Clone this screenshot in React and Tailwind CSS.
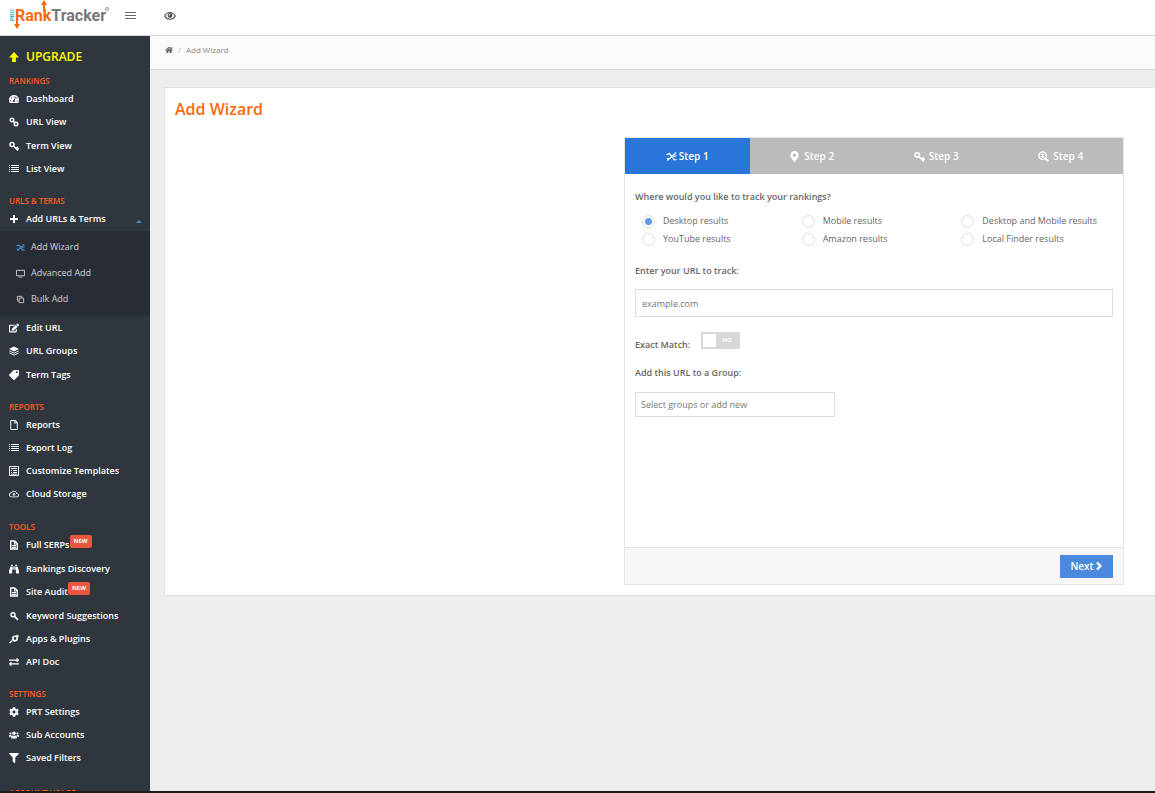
import React, { useState } from "react";
import {
  FaBinoculars,
  FaCog,
  FaEdit,
  FaExchangeAlt,
  FaFilter,
  FaHome,
  FaMapMarkerAlt,
  FaRegFile,
  FaTachometerAlt,
  FaTag,
  FaUsers,
} from "react-icons/fa";
import { MdOutlineCloudUpload } from "react-icons/md";

const UpIcon = ({ className }) => (
  <svg viewBox="0 0 10 10" fill="currentColor" className={className}>
    <path d="M5 0l5 5.5H6.8V10H3.2V5.5H0z" />
  </svg>
);

const KeyIcon = ({ className }) => (
  <svg
    viewBox="0 0 10 10"
    fill="none"
    stroke="currentColor"
    strokeWidth="1.5"
    className={className}
  >
    <circle cx="3" cy="3.6" r="2" />
    <path d="M4.5 5L9 9.5M7 7.5l1.8-1.8M8.2 8.6L10 7" />
  </svg>
);

const ChainIcon = ({ className }) => (
  <svg
    viewBox="0 0 10 10"
    fill="none"
    stroke="currentColor"
    strokeWidth="1.4"
    className={className}
  >
    <circle cx="3" cy="3" r="1.8" />
    <circle cx="7" cy="7" r="1.8" />
    <path d="M3.8 3.8l2.4 2.4" />
  </svg>
);

const PlusIcon = ({ className }) => (
  <svg viewBox="0 0 10 10" fill="currentColor" className={className}>
    <path d="M4 1h2v3h3v2H6v3H4V6H1V4h3z" />
  </svg>
);

const SearchIcon = ({ className }) => (
  <svg viewBox="0 0 10 10" fill="none" stroke="currentColor" className={className}>
    <circle cx="4" cy="3.8" r="2" strokeWidth="1.4" />
    <path d="M5.5 5.3l3.5 3.5" strokeWidth="1.8" />
  </svg>
);

const GlobeSearchIcon = ({ className }) => (
  <svg viewBox="0 0 10 10" fill="none" stroke="currentColor" className={className}>
    <circle cx="4.2" cy="4.2" r="3.4" strokeWidth="1.3" />
    <path d="M4.2 2v4.4M2.6 3.2h3.2M2.6 5.2h3.2" strokeWidth="0.9" />
    <path d="M6.8 6.8l2.6 2.6" strokeWidth="1.8" />
  </svg>
);

const WizardIcon = ({ className }) => (
  <svg
    viewBox="0 0 12 12"
    fill="none"
    stroke="currentColor"
    strokeWidth="1.4"
    className={className}
  >
    <path d="M1.5 10.5L11 1.5M3.5 2.5l5.5 7M0.5 4l4-1.5M8 6l3.5-1M1 8.5l3-0.5M8 9.5h3.5" />
  </svg>
);

const LinesIcon = ({ className }) => (
  <svg
    viewBox="0 0 10 10"
    fill="currentColor"
    shapeRendering="crispEdges"
    className={className}
  >
    <path d="M0 1h1v1H0zM2 1h8v1H2zM0 3h1v1H0zM2 3h8v1H2zM0 5h1v1H0zM2 5h8v1H2zM0 7h1v1H0zM2 7h8v1H2z" />
  </svg>
);

const ScreenIcon = ({ className }) => (
  <svg viewBox="0 0 10 10" fill="none" stroke="currentColor" className={className}>
    <path d="M0.5 1.5h9v6h-9zM3 9h4" />
  </svg>
);

const CopyIcon = ({ className }) => (
  <svg viewBox="0 0 10 10" fill="none" stroke="currentColor" className={className}>
    <path d="M3.5 3.5h5v5h-5zM3 6.5H1.5v-5h5V3" />
  </svg>
);

const LayersIcon = ({ className }) => (
  <svg viewBox="0 0 10 10" className={className}>
    <path d="M5 0.5L10 3 5 5.5 0 3z" fill="currentColor" />
    <path
      d="M0.4 5L5 7.2 9.6 5M0.4 7L5 9.2 9.6 7"
      fill="none"
      stroke="currentColor"
      strokeWidth="0.9"
    />
  </svg>
);

const TemplateIcon = ({ className }) => (
  <svg viewBox="0 0 10 10" fill="none" stroke="currentColor" className={className}>
    <path d="M0.5 0.5h9v9h-9zM2 2.5h6M2 4.5h1M4 4.5h4M2 6.5h1M4 6.5h4M2 8.2h6" />
  </svg>
);

const DocIcon = ({ className }) => (
  <svg viewBox="0 0 10 10" fill="none" stroke="currentColor" className={className}>
    <path d="M1.7 1h4l2.6 2.6V9H1.7z" strokeWidth="1.4" />
    <path d="M5.5 1v3h3M3 5.5h4M3 7.4h4" strokeWidth="1.1" />
  </svg>
);

const PlugIcon = ({ className }) => (
  <svg viewBox="0 0 10 10" fill="none" stroke="currentColor" className={className}>
    <path d="M0.5 9l3-2.5" strokeWidth="1.6" />
    <circle cx="6" cy="4.5" r="2.2" strokeWidth="1.6" />
    <path d="M7.5 1l2 1.5M3 4.5l3 3M8 3l1.5-1.5" strokeWidth="1.2" />
  </svg>
);

const ChevronIcon = ({ className }) => (
  <svg
    viewBox="0 0 8 8"
    fill="none"
    stroke="currentColor"
    strokeWidth="2.2"
    className={className}
  >
    <path d="M2 0.5L5.5 4 2 7.5" />
  </svg>
);

const EyeIcon = ({ className }) => (
  <svg viewBox="0 0 12 10" fill="none" stroke="currentColor" className={className}>
    <path d="M0.7 5C3 0.3 9 0.3 11.3 5 9 9.3 3 9.3 0.7 5z" strokeWidth="1.2" />
    <circle cx="6" cy="4.5" r="2.4" fill="currentColor" stroke="none" />
    <circle cx="5.4" cy="3.8" r="0.7" fill="white" stroke="none" />
  </svg>
);

const SECTIONS = [
  {
    title: "Rankings",
    items: [
      { label: "Dashboard", icon: FaTachometerAlt },
      { label: "URL View", icon: ChainIcon, tall: true },
      { label: "Term View", icon: KeyIcon },
      { label: "List View", icon: LinesIcon },
    ],
  },
  {
    title: "URLs & Terms",
    items: [
      {
        label: "Add URLs & Terms",
        icon: PlusIcon,
        tall: true,
        children: [
          { label: "Add Wizard", icon: WizardIcon, active: true },
          { label: "Advanced Add", icon: ScreenIcon },
          { label: "Bulk Add", icon: CopyIcon },
        ],
      },
      { label: "Edit URL", icon: FaEdit },
      { label: "URL Groups", icon: LayersIcon, tall: true },
      { label: "Term Tags", icon: FaTag, flip: true },
    ],
  },
  {
    title: "Reports",
    items: [
      { label: "Reports", icon: FaRegFile },
      { label: "Export Log", icon: LinesIcon },
      { label: "Customize Templates", icon: TemplateIcon },
      { label: "Cloud Storage", icon: MdOutlineCloudUpload, tall: true },
    ],
  },
  {
    title: "Tools",
    items: [
      { label: "Full SERPs", icon: DocIcon, tall: true, isNew: true },
      { label: "Rankings Discovery", icon: FaBinoculars },
      { label: "Site Audit", icon: DocIcon, tall: true, isNew: true },
      { label: "Keyword Suggestions", icon: SearchIcon },
      { label: "Apps & Plugins", icon: PlugIcon },
      { label: "API Doc", icon: FaExchangeAlt },
    ],
  },
  {
    title: "Settings",
    items: [
      { label: "PRT Settings", icon: FaCog },
      { label: "Sub Accounts", icon: FaUsers },
      { label: "Saved Filters", icon: FaFilter },
    ],
  },
  { title: "Account Usage", items: [] },
];

const STEPS = [
  { label: "Step 1", icon: WizardIcon },
  { label: "Step 2", icon: FaMapMarkerAlt },
  { label: "Step 3", icon: KeyIcon },
  { label: "Step 4", icon: GlobeSearchIcon },
];

const RESULT_TYPES = [
  "Desktop results",
  "Mobile results",
  "Desktop and Mobile results",
  "YouTube results",
  "Amazon results",
  "Local Finder results",
];

const Logo = () => (
  <svg
    viewBox="0 0 104 32"
    className="w-[104px] h-8"
    role="img"
    aria-label="Pro Rank Tracker"
  >
    <text
      x="-21"
      y="6"
      transform="rotate(-90)"
      fontSize="6"
      fontWeight="700"
      fill="#2bb8d6"
      fontFamily="Roboto, sans-serif"
    >
      PRO
    </text>
    <text x="7" y="21" fontSize="16" fontWeight="700" fontFamily="Roboto, sans-serif">
      <tspan fill="#f96a0e">Rank</tspan>
      <tspan fill="#77787b">Tracker</tspan>
    </text>
    <path d="M9 10v15M36 4v8" stroke="#f96a0e" strokeWidth="2" />
    <path d="M6 24h6l-3 5zM33 5h6l-3-5z" fill="#f96a0e" />
    <circle cx="99" cy="9" r="1.5" fill="none" stroke="#77787b" strokeWidth="0.8" />
  </svg>
);

const Header = () => (
  <header className="flex items-center h-9 shrink-0 bg-white border-b border-[#dddddd] text-[#555555]">
    <a href="#" className="w-[125px] pl-2 h-9">
      <Logo />
    </a>
    <button
      type="button"
      aria-label="Toggle menu"
      className="flex flex-col gap-[2px] pb-1 cursor-pointer"
    >
      <span className="w-[11px] h-px bg-[#666666]" />
      <span className="w-[11px] h-px bg-[#666666]" />
      <span className="w-[11px] h-px bg-[#666666]" />
    </button>
    <button type="button" aria-label="Preview" className="ml-7 pb-1 cursor-pointer">
      <EyeIcon className="w-3 h-[10px]" />
    </button>
  </header>
);

const NavItem = ({ item }) => {
  const Icon = item.icon;
  return (
    <li>
      <a
        href="#"
        className={`flex items-center pl-[9px] pr-2 text-white font-semibold ${
          item.tall ? "h-6" : "h-[23px]"
        }`}
      >
        <Icon
          className={`size-[10px] shrink-0 mr-[7px] ${item.flip ? "-scale-x-100" : ""}`}
        />
        <span className="whitespace-nowrap">{item.label}</span>
        {item.isNew && (
          <span className="mb-2 h-[13px] px-1 rounded-xs bg-[#e9573f] text-[6px] leading-[13px] font-bold">
            NEW
          </span>
        )}
        {item.children && (
          <span className="ml-auto mt-1 border-x-3 border-x-transparent border-b-3 border-b-[#4a89dc]" />
        )}
      </a>
      {item.children && (
        <ul className="bg-[#282d35] pt-[3px] pb-1">
          {item.children.map(({ label, icon: ChildIcon, active }) => (
            <li key={label}>
              <a
                href="#"
                className="flex items-center gap-[6px] h-[26px] pl-4 text-[#cfd0d2]"
              >
                <ChildIcon
                  className={`size-[9px] shrink-0 ${active ? "text-[#4a89dc]" : ""}`}
                />
                {label}
              </a>
            </li>
          ))}
        </ul>
      )}
    </li>
  );
};

const Sidebar = () => (
  <nav className="w-[150px] shrink-0 bg-[#30363e] overflow-hidden text-[9px]">
    <a
      href="#"
      className="flex items-center h-[39px] pt-[2px] pl-[9px] text-[12px] font-semibold text-[#ffff00]"
    >
      <UpIcon className="size-[10px] mr-[7px]" />
      UPGRADE
    </a>
    {SECTIONS.map((section) => (
      <div key={section.title} className="mb-[15px] last:pt-[3px]">
        <h2 className="pl-[9px] h-3 text-[8px] leading-3 uppercase whitespace-nowrap font-semibold text-[#ff5a1f]">
          {section.title}
        </h2>
        <ul>
          {section.items.map((item) => (
            <NavItem key={item.label} item={item} />
          ))}
        </ul>
      </div>
    ))}
  </nav>
);

const Wizard = () => {
  const [step, setStep] = useState(0);
  const [resultType, setResultType] = useState(RESULT_TYPES[0]);
  const [exactMatch, setExactMatch] = useState(false);

  return (
    <form className="w-full max-w-[500px] ml-auto border border-[#e5e5e5]">
      {/* Steps */}
      <div className="grid grid-cols-4 bg-[#bbbbbb]">
        {STEPS.map(({ label, icon: Icon }, idx) => (
          <button
            key={label}
            type="button"
            onClick={() => setStep(idx)}
            className={`flex items-center justify-center h-9 text-white text-[10px] font-semibold cursor-pointer ${
              idx === 0 ? "gap-[2px]" : "gap-1"
            } ${step === idx ? "bg-[#2a76d8]" : ""}`}
          >
            <Icon className="size-[11px]" />
            {label}
          </button>
        ))}
      </div>

      {/* Fields */}
      <div className="px-[10px] pt-4 pb-[130px] text-[#666666]">
        <fieldset>
          <legend className="font-semibold leading-[14px]">
            Where would you like to track your rankings?
          </legend>
          <div className="grid grid-cols-3 mt-2 pl-[7px] -mr-2">
            {RESULT_TYPES.map((type) => (
              <label
                key={type}
                className="flex items-center gap-2 h-[18px] whitespace-nowrap"
              >
                <input
                  type="radio"
                  name="result-type"
                  checked={resultType === type}
                  onChange={() => setResultType(type)}
                  className="appearance-none size-[13px] rounded-full border border-[#dddddd] bg-white checked:bg-[#5d9cec] checked:bg-clip-content p-[2px]"
                />
                {type}
              </label>
            ))}
          </div>
        </fieldset>

        <label htmlFor="url" className="block mt-4 font-semibold leading-[14px]">
          Enter your URL to track:
        </label>
        <input
          id="url"
          type="text"
          placeholder="example.com"
          className="block w-full h-7 mt-[11px] px-[6px] border border-[#dddddd] placeholder:text-[#777777] outline-none"
        />

        <div className="flex items-start mt-[15px]">
          <label
            htmlFor="exact"
            className="w-[66px] pt-[6px] font-semibold leading-[14px]"
          >
            Exact Match:
          </label>
          <button
            id="exact"
            type="button"
            role="switch"
            aria-checked={exactMatch}
            onClick={() => setExactMatch(!exactMatch)}
            className="flex items-center w-[39px] h-[17px] p-[2px] bg-[#d7d7d7] text-white text-[6px] font-bold cursor-pointer"
          >
            <span className="w-[13px] h-[13px] bg-white" />
            <span className="flex-1 text-center">{exactMatch ? "YES" : "NO"}</span>
          </button>
        </div>

        <label htmlFor="group" className="block mt-[14px] font-semibold leading-[14px]">
          Add this URL to a Group:
        </label>
        <input
          id="group"
          type="text"
          placeholder="Select groups or add new"
          className="block w-[200px] h-[25px] mt-3 px-[5px] border border-[#dddddd] placeholder:text-[#777777] outline-none"
        />
      </div>

      {/* Footer */}
      <div className="flex justify-end items-center h-[37px] px-[10px] bg-[#f7f7f7] border-t border-[#e5e5e5]">
        <button
          type="button"
          onClick={() => setStep(Math.min(step + 1, STEPS.length - 1))}
          className="flex items-center justify-center gap-px w-[53px] h-[23px] bg-[#4a89dc] text-white text-[10px] font-semibold cursor-pointer"
        >
          Next
          <ChevronIcon className="size-2" />
        </button>
      </div>
    </form>
  );
};

const App = () => {
  return (
    <div className="flex flex-col h-screen overflow-hidden bg-[#ededed] font-['Open_Sans',sans-serif] text-[9px] border-b-2 border-[#1c1a1c]">
      <Header />
      <div className="flex flex-1 min-h-0">
        <Sidebar />
        <main className="flex-1 min-w-0">
          {/* Breadcrumb */}
          <div className="flex items-center gap-[5px] h-[34px] pl-[15px] pb-[6px] bg-[#fafafa] border-b border-[#dddddd] text-[8px] text-[#888888]">
            <a href="#" aria-label="Home">
              <FaHome className="size-2 text-[#666666]" />
            </a>
            <span className="text-[#bbbbbb]">/</span>
            <span>Add Wizard</span>
          </div>

          <section className="mt-[17px] ml-[14px] pl-[10px] pr-[31px] pb-[10px] bg-white border border-r-0 border-[#e2e2e2]">
            <h1 className="pt-[11px] mb-[18px] text-[16px] leading-5 font-semibold text-[#f96a0e]">
              Add Wizard
            </h1>
            <Wizard />
          </section>
        </main>
      </div>
    </div>
  );
};

export default App;
